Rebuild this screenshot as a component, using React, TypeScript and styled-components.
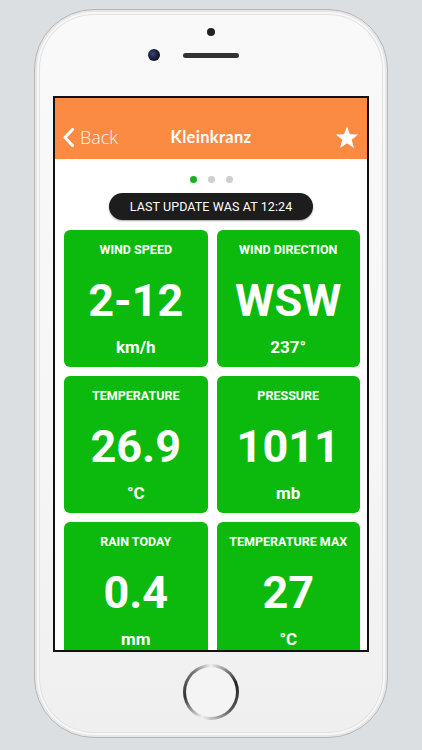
import React from "react";
import styled, { createGlobalStyle } from "styled-components";

const Global = createGlobalStyle`
  html, body { margin: 0; padding: 0; }
  body {
    background: #dcdfe2;
    font-family: Roboto, "Liberation Sans", Arial, sans-serif;
    width: 422px;
    height: 750px;
    overflow: hidden;
  }
`;

const Stage = styled.div`
  width: 422px;
  height: 750px;
  display: flex;
  justify-content: center;
  padding-top: 9px;
  box-sizing: border-box;
`;

const Phone = styled.div`
  width: 354px;
  height: 729px;
  box-sizing: border-box;
  border-radius: 60px;
  border: 1px solid #b4b6b8;
  background: linear-gradient(180deg, #f9f9f9 0%, #f6f6f6 60%, #efefef 100%);
  box-shadow: inset 0 0 0 2px #e6e6e7, inset 0 0 0 4px #f7f7f7, inset 0 0 0 5px #e2e2e2;
  display: flex;
  flex-direction: column;
  align-items: center;
  padding-top: 18px;
`;

const FrontDot = styled.div`
  width: 8px;
  height: 8px;
  border-radius: 50%;
  background: #222;
`;

const SensorRow = styled.div`
  width: 100%;
  display: grid;
  grid-template-columns: 1fr auto 1fr;
  align-items: center;
  margin-top: 13px;
`;

const Camera = styled.div`
  justify-self: end;
  margin-right: 23px;
  width: 12px;
  height: 12px;
  border-radius: 50%;
  background: radial-gradient(circle at 40% 40%, #3a4a7a 0%, #1a2040 45%, #111 75%);
`;

const Speaker = styled.div`
  width: 56px;
  height: 5px;
  border-radius: 3px;
  background: #333;
`;

const Screen = styled.div`
  flex: none;
  margin-top: 35px;
  width: 316px;
  height: 556px;
  box-sizing: border-box;
  border: 2px solid #111;
  background: #fff;
  overflow: hidden;
  display: flex;
  flex-direction: column;
`;

const Header = styled.div`
  flex: none;
  height: 61px;
  background: #fb8a43;
  box-sizing: border-box;
  padding: 17px 8px 0 8px;
  display: grid;
  grid-template-columns: 1fr auto 1fr;
  align-items: center;
`;

const BackButton = styled.div`
  display: flex;
  align-items: center;
  gap: 6px;
  color: rgba(255, 255, 255, 0.94);
  font-family: "Open Sans", "Liberation Sans", sans-serif;
  font-weight: 300;
  font-size: 18px;
  height: 44px;
`;

const Title = styled.div`
  color: #fff;
  font-family: Lato, "Open Sans", sans-serif;
  font-weight: 700;
  font-size: 16.5px;
  letter-spacing: 0.3px;
`;

const StarWrap = styled.div`
  justify-self: end;
  display: flex;
  align-items: center;
`;

const Pager = styled.div`
  flex: none;
  display: flex;
  justify-content: center;
  gap: 11px;
  margin-top: 17px;
`;

const PageDot = styled.div<{ $active?: boolean }>`
  width: 7px;
  height: 7px;
  border-radius: 50%;
  background: ${(p) => (p.$active ? "#11b41a" : "#cfcfcf")};
`;

const Pill = styled.div`
  flex: none;
  align-self: center;
  margin-top: 10px;
  width: 204px;
  height: 27px;
  border-radius: 14px;
  background: #1d1d1d;
  box-shadow: 0 1px 2px rgba(0, 0, 0, 0.35);
  color: #fff;
  font-size: 12.5px;
  display: flex;
  align-items: center;
  justify-content: center;
  letter-spacing: 0.1px;
`;

const Grid = styled.div`
  flex: none;
  margin-top: 10px;
  padding: 0 7px 0 9px;
  display: grid;
  grid-template-columns: 1fr 1fr;
  column-gap: 9px;
  row-gap: 9px;
`;

const Card = styled.div`
  height: 137px;
  border-radius: 6px;
  background: #0bba0c;
  color: #fff;
  display: flex;
  flex-direction: column;
  align-items: center;
  box-sizing: border-box;
  padding-top: 12px;
  font-weight: 700;
`;

const Label = styled.div`
  font-size: 12.5px;
  line-height: 16px;
  font-weight: 700;
  text-transform: uppercase;
`;

const Value = styled.div`
  margin-top: 17px;
  font-size: 45px;
  line-height: 52px;
  font-weight: 700;
`;

const Unit = styled.div`
  margin-top: 10px;
  font-size: 17px;
  line-height: 20px;
  font-weight: 700;
`;

const HomeButton = styled.div`
  flex: none;
  margin-top: 12px;
  width: 56px;
  height: 56px;
  box-sizing: border-box;
  border-radius: 50%;
  padding: 3px;
  background: conic-gradient(from 200deg, #f0f0f0, #333 60deg, #777 120deg, #eee 160deg, #222 230deg, #555 290deg, #f0f0f0 360deg);
`;

const HomeInner = styled.div`
  width: 100%;
  height: 100%;
  border-radius: 50%;
  background: #f4f4f4;
`;

const tiles = [
  { label: "Wind Speed", value: "2-12", unit: "km/h" },
  { label: "Wind Direction", value: "WSW", unit: "237°" },
  { label: "Temperature", value: "26.9", unit: "°C" },
  { label: "Pressure", value: "1011", unit: "mb" },
  { label: "Rain Today", value: "0.4", unit: "mm" },
  { label: "Temperature Max", value: "27", unit: "°C" },
];

export default function App() {
  return (
    <>
      <Global />
      <Stage>
        <Phone>
          <FrontDot />
          <SensorRow>
            <Camera />
            <Speaker />
            <div />
          </SensorRow>
          <Screen>
            <Header>
              <BackButton>
                <svg width="11" height="19" viewBox="0 0 11 19">
                  <polyline points="9.5,1.5 2,9.5 9.5,17.5" fill="none" stroke="#fff" strokeWidth="3" strokeLinecap="round" strokeLinejoin="round" />
                </svg>
                Back
              </BackButton>
              <Title>Kleinkranz</Title>
              <StarWrap>
                <svg width="24" height="23" viewBox="0 0 24 23">
                  <polygon fill="#fff" points="12,0.5 14.9,8.2 23.2,8.6 16.7,13.8 18.9,21.9 12,17.3 5.1,21.9 7.3,13.8 0.8,8.6 9.1,8.2" />
                </svg>
              </StarWrap>
            </Header>
            <Pager>
              <PageDot $active />
              <PageDot />
              <PageDot />
            </Pager>
            <Pill>LAST UPDATE WAS AT 12:24</Pill>
            <Grid>
              {tiles.map((t) => (
                <Card key={t.label}>
                  <Label>{t.label}</Label>
                  <Value>{t.value}</Value>
                  <Unit>{t.unit}</Unit>
                </Card>
              ))}
            </Grid>
          </Screen>
          <HomeButton>
            <HomeInner />
          </HomeButton>
        </Phone>
      </Stage>
    </>
  );
}
